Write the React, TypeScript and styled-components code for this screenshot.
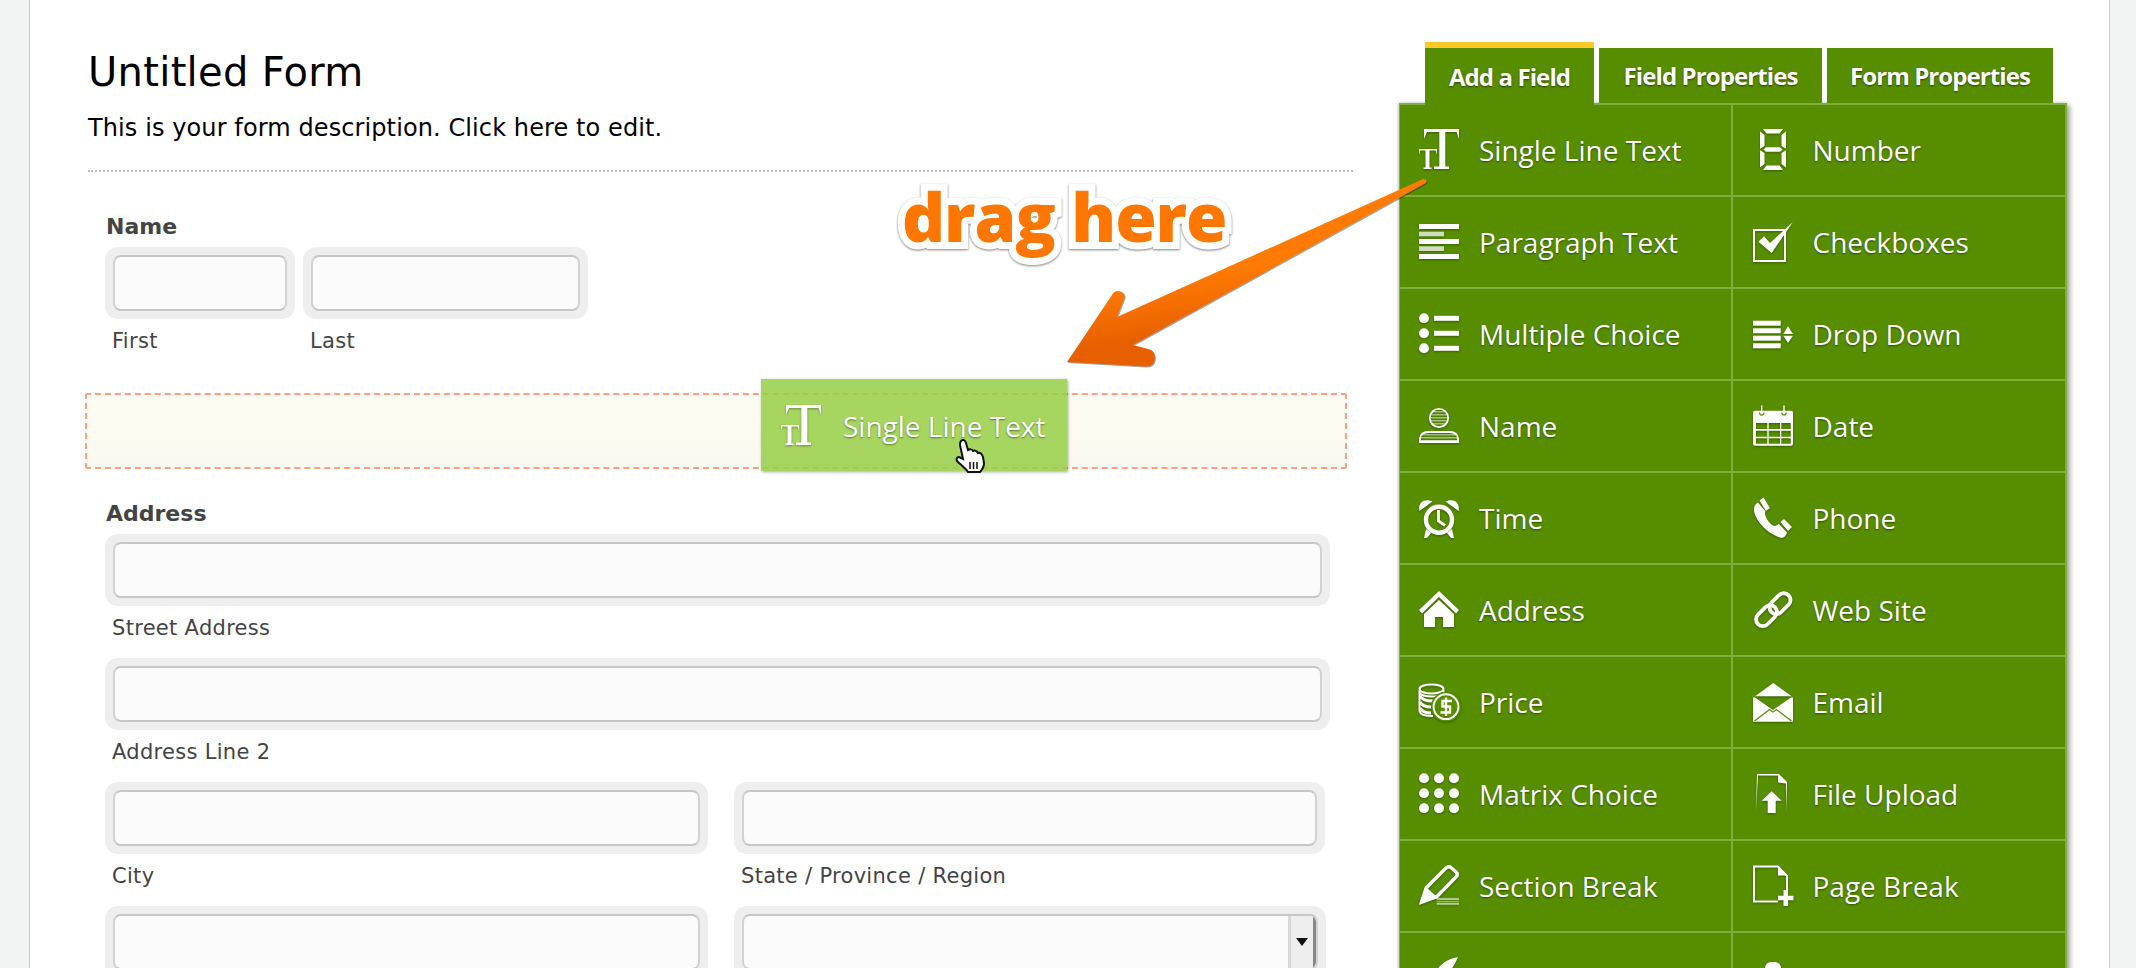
import React from "react";
import styled, { createGlobalStyle } from "styled-components";

const W = "#fff";

const stripes = (y: number, h: number, x: number, w: number) => {
  const out = [];
  for (let i = y; i < y + h; i += 3) {
    out.push(<rect key={i} x={x} y={i} width={w} height={1.5} fill={W} opacity={0.5} />);
  }
  return out;
};

const icons: Record<string, React.ReactNode> = {
  single: (
    <>
      <path d="M5 0H40V10L37.5 3H26.3V37.5H30V40H15V37.5H20.3V3H8L5 10Z" fill={W} />
      <path d="M0 20H18V26L16.8 21.5H10.5V38.5H12.5V40H4.5V38.5H6.5V21.5H1.2L0 26Z" fill={W} />
    </>
  ),
  paragraph: (
    <>
      <rect y="3" width="40" height="5" fill={W} />
      <rect y="10.7" width="25" height="4.6" fill={W} opacity="0.75" />
      <rect y="18" width="40" height="5" fill={W} />
      <rect y="25.3" width="25" height="4.7" fill={W} opacity="0.75" />
      <rect y="33" width="40" height="5" fill={W} />
    </>
  ),
  multiple: (
    <>
      {[5.3, 20.3, 35.3].map((y) => (
        <g key={y}>
          <circle cx="5" cy={y} r="5" fill={W} />
          <rect x="15" y={y - 2.5} width="25" height="5" fill={W} />
        </g>
      ))}
    </>
  ),
  name: (
    <>
      <clipPath id="nameHead">
        <circle cx="20" cy="13" r="9" />
      </clipPath>
      <clipPath id="nameBody">
        <path d="M0 37.5V34C0 28.5 5 26 10 26H30C35 26 40 28.5 40 34V37.5Z" />
      </clipPath>
      <g clipPath="url(#nameHead)">{stripes(3, 20, 10, 20)}</g>
      <g clipPath="url(#nameBody)">{stripes(26, 12, 0, 40)}</g>
      <circle cx="20" cy="13" r="9.2" fill="none" stroke={W} strokeWidth="1.8" />
      <path d="M1 37V34C1 29 5 27 10 27H30C35 27 39 29 39 34V37Z" fill="none" stroke={W} strokeWidth="1.8" />
      <rect y="35.5" width="40" height="2.5" fill={W} />
    </>
  ),
  time: (
    <>
      <path d="M0.5 14C-1.500 6 5 0.500 13.500 4.500Z M39.500 14C41.500 6 35 0.500 26.500 4.500Z" fill={W} />
      <circle cx="20" cy="22.700" r="13" fill="none" stroke={W} strokeWidth="4.400" />
      <path d="M19.500 13V24L26 28.500" fill="none" stroke={W} strokeWidth="2.800" />
      <path d="M7 32L5 41H8L12 36Z M33 32L35 41H32L28 36Z" fill={W} />
    </>
  ),
  address: (
    <>
      <path d="M20 2L40 21L37 24.5L20 8L3 24.5L0 21Z" fill={W} />
      <path d="M20 11L35 25V38H24V28H16V38H5V25Z" fill={W} />
    </>
  ),
  price: (
    <>
      <ellipse cx="12.5" cy="8" rx="12" ry="4.6" fill="none" stroke={W} strokeWidth="2" />
      <path d="M0.5 9V30C1 33 6 35 14 35" fill="none" stroke={W} strokeWidth="2" />
      <path d="M24.5 9V13C22 14.500 17 15.500 12.500 15.500C7 15.500 1 14 0.500 11.500" fill="none" stroke={W} strokeWidth="2" />
      <path d="M1 15C3 19 8 20 14 20M1 21C3 25 7 26 12 26M1 27C3 31 7 32 12 32" fill="none" stroke={W} strokeWidth="3" />
      <circle cx="27" cy="25.7" r="15" fill="#568e00" />
      <circle cx="27" cy="25.7" r="12.4" fill="none" stroke={W} strokeWidth="2" />
      <path d="M33 20H23.500V25.500H31V31.500H21.500M27 16.500V35" fill="none" stroke={W} strokeWidth="2.400" />
    </>
  ),
  matrix: (
    <>
      {[5.3, 20.3, 35.3].map((y) =>
        [5, 20, 35].map((x) => <circle key={`${x}-${y}`} cx={x} cy={y} r="5" fill={W} />)
      )}
    </>
  ),
  section: (
    <>
      <path d="M3 36L8 22L27 3C29 1.500 30.500 1.500 32 2.500L37 7C38.500 8.500 38.500 10.500 37 12L18 31.500Z" fill="none" stroke={W} strokeWidth="3.400" />
      <path d="M0 40L6 21L19 33Z" fill={W} />
      <rect x="17.700" y="33" width="22.300" height="2" fill={W} opacity="0.55" />
      <rect x="17.700" y="35.800" width="22.300" height="1.600" fill={W} opacity="0.4" />
      <rect x="17.700" y="38" width="22.300" height="1.800" fill={W} opacity="0.6" />
    </>
  ),
  signature: <path d="M39 0C28 2 20 8 17 15L6 36L18 24C28 20 35 10 39 0Z" fill={W} />,
  number: (
    <path
      d="M10 0H30L26.500 4.500H13.500Z M7 2.500L11.500 6V17L7 19.800Z M33 2.500L28.500 6V17L33 19.800Z M13 18.300H27L29.500 20.500L27 22.700H13L10.500 20.500Z M7 21.200L11.500 24V35L7 38.500Z M33 21.200L28.500 24V35L33 38.500Z M13.500 36.500H26.500L30 41H10Z"
      fill={W}
    />
  ),
  checkbox: (
    <>
      <rect x="1" y="9" width="31" height="31" fill="none" stroke={W} strokeWidth="2" />
      <path d="M5.300 20.700L11 15.300L17 22L39.700 1.300L18.700 32Z" fill={W} />
    </>
  ),
  dropdown: (
    <>
      {[7.7, 15.3, 22.7, 30.3].map((y) => (
        <rect key={y} y={y} width="27.700" height="5" fill={W} />
      ))}
      <path d="M35 13.300L40 21H30.300Z M30.300 22.700H40L35 30Z" fill={W} />
    </>
  ),
  date: (
    <>
      <path
        fillRule="evenodd"
        d="M2 5.700H38A2 2 0 0 1 40 7.700V38.700A2 2 0 0 1 38 40.700H2A2 2 0 0 1 0 38.700V7.700A2 2 0 0 1 2 5.700Z M3 18V24H14.300V18Z M15.700 18V24H27V18Z M28.300 18V24H37.700V18Z M3 25.700V31.700H14.300V25.700Z M15.700 25.700V31.700H27V25.700Z M28.300 25.700V31.700H37.700V25.700Z M3 33.300V38.700H14.300V33.300Z M15.700 33.300V38.700H27V33.300Z M28.300 33.300V38.700H37.700V33.300Z"
        fill={W}
      />
      <path d="M8.700 0.500V9M31 0.500V9" stroke={W} strokeWidth="1.500" />
      <path d="M6.500 7.500A2.200 2.500 0 0 0 11 7.500M28.800 7.500A2.200 2.500 0 0 0 33.200 7.500" fill="none" stroke="#568e00" strokeWidth="1.200" />
    </>
  ),
  phone: (
    <>
      <path d="M6.500 3.500L10.500 0.500L17 11L13 14Z" fill={W} />
      <path d="M27.500 25L31 22L39 30L35 34Z" fill={W} />
      <path d="M5 5.500C0 8 0 14 3 20C8 30 18 38 28.500 41C31 41 33 38.500 34 35.500L26 27C24 28.500 21.500 30 19 28C15 25 12 19.500 12 16C12 15 12.500 14.500 12.500 14.500Z" fill={W} />
    </>
  ),
  site: (
    <>
      <rect x="15" y="8" width="24" height="13.500" rx="6.700" transform="rotate(-45 27 14.700)" fill="none" stroke={W} strokeWidth="3.800" />
      <rect x="1.500" y="20" width="24" height="13.500" rx="6.700" transform="rotate(-45 13.500 26.700)" fill="none" stroke={W} strokeWidth="3.800" />
    </>
  ),
  email: (
    <>
      <path d="M20.300 2L38.700 15.300H2Z" fill={W} />
      <path d="M0 16.500H2L20 29L38 16.500H40V40.700H0Z" fill={W} />
      <path d="M1.500 40L16.500 28.500L20 31L23.500 28.500L38.500 40" fill="none" stroke="#568e00" strokeWidth="1.300" />
    </>
  ),
  upload: (
    <>
      <path d="M3 39L4 1H26L34 9V39L33 10.500L25 9.500V2.500H5Z" fill={W} />
      <path d="M18.700 18.300L28.700 27.700H22.700V40H14.700V27.700H8.700Z" fill={W} />
    </>
  ),
  page: (
    <>
      <path d="M25 36.500H1V1.500H25L34 11V26" fill="none" stroke={W} strokeWidth="2" />
      <path d="M25 1.500V10.500H34Z" fill={W} />
      <path d="M30.500 25H35V30.700H40.500V35.300H35V41H30.500V35.300H25V30.700H30.500Z" fill={W} />
    </>
  ),
  media: <rect x="12" y="5" width="16" height="34" rx="6" fill={W} />,
};

const fields = [
  ["single", "Single Line Text"],
  ["number", "Number"],
  ["paragraph", "Paragraph Text"],
  ["checkbox", "Checkboxes"],
  ["multiple", "Multiple Choice"],
  ["dropdown", "Drop Down"],
  ["name", "Name"],
  ["date", "Date"],
  ["time", "Time"],
  ["phone", "Phone"],
  ["address", "Address"],
  ["site", "Web Site"],
  ["price", "Price"],
  ["email", "Email"],
  ["matrix", "Matrix Choice"],
  ["upload", "File Upload"],
  ["section", "Section Break"],
  ["page", "Page Break"],
  ["signature", "Signature"],
  ["media", "Media"],
];

function FieldIcon({ name }: { name: string }) {
  return (
    <IconSvg viewBox="0 0 40 41" width="40" height="41">
      {icons[name]}
    </IconSvg>
  );
}

function Box({ width, children }: { width: number; children?: React.ReactNode }) {
  return (
    <InputWrap $width={width}>
      <InputField>{children}</InputField>
    </InputWrap>
  );
}

function App() {
  return (
    <>
      <GlobalStyle />
      <Page>
        <FormColumn>
          <FormTitle>Untitled Form</FormTitle>
          <FormDesc>This is your form description. Click here to edit.</FormDesc>
          <Rule />
          <FieldBlock>
            <FieldLabel>Name</FieldLabel>
            <FieldRow $gap={8}>
              <div>
                <Box width={190} />
                <SubLabel>First</SubLabel>
              </div>
              <div>
                <Box width={285} />
                <SubLabel>Last</SubLabel>
              </div>
            </FieldRow>
          </FieldBlock>
          <DropZone />
          <FieldBlock>
            <FieldLabel>Address</FieldLabel>
            <Box width={1225} />
            <SubLabel>Street Address</SubLabel>
            <Box width={1225} />
            <SubLabel>Address Line 2</SubLabel>
            <FieldRow $gap={26}>
              <div>
                <Box width={603} />
                <SubLabel>City</SubLabel>
                <Box width={603} />
              </div>
              <div>
                <Box width={591} />
                <SubLabel>State / Province / Region</SubLabel>
                <Box width={592}>
                  <SelectButton>
                    <SelectArrow />
                  </SelectButton>
                </Box>
              </div>
            </FieldRow>
          </FieldBlock>
        </FormColumn>

        <Sidebar>
          <TabRow>
            <Tab $active>Add a Field</Tab>
            <Tab $width={223}>Field Properties</Tab>
            <Tab $width={226}>Form Properties</Tab>
          </TabRow>
          <Panel>
            {fields.map(([icon, text]) => (
              <FieldCell key={text}>
                <FieldIcon name={icon} />
                <CellText>{text}</CellText>
              </FieldCell>
            ))}
          </Panel>
        </Sidebar>

        <DragHint>drag here</DragHint>

        <ArrowSvg viewBox="1060 175 372 197" width="372" height="197">
          <defs>
            <linearGradient id="arrowFill" x1="0.42" y1="0.5" x2="0.5" y2="0.78">
              <stop offset="0" stopColor="#ff7a00" />
              <stop offset="1" stopColor="#e65f00" />
            </linearGradient>
          </defs>
          <path
            d="M1422 179.500C1425 178 1428 181 1426 183L1133 345L1148 349C1155 350 1156 358 1154 362C1152 366 1149 367 1145 366.500L1067 362L1112 295C1114 290 1120 290 1123 293C1125 295 1125 297 1124 299L1117 317Z"
            fill="url(#arrowFill)"
          />
        </ArrowSvg>

        <DragChip>
          <FieldIcon name="single" />
          <CellText>Single Line Text</CellText>
        </DragChip>

        <HandCursor viewBox="0 0 30 34" width="30" height="34">
          <path
            d="M6 2C8 0 10 1 11 4L13 11C15 10 17 10 18 12C20 11 22 12 23 14C25 13 27 15 28 18L29 24C29 28 27 31 25 33H13C10 29 6 26 2 22C1 20 2 18 4 18L8 20L5 6C5 4 5 3 6 2Z"
            fill={W}
            stroke="#111"
            strokeWidth="2"
          />
          <path d="M15 23V30M18.500 23V30M22 23V30" stroke="#111" strokeWidth="1.500" />
        </HandCursor>
      </Page>
    </>
  );
}

export default App;

const GlobalStyle = createGlobalStyle`
  html, body {
    margin: 0;
    padding: 0;
    height: 968px;
    overflow: hidden;
    background: #f1f4f3;
  }
`;

const Page = styled.div`
  position: relative;
  display: flex;
  box-sizing: border-box;
  width: 2081px;
  height: 968px;
  margin-left: 29px;
  background: #fff;
  border-left: 1px solid #c8c8c8;
  border-right: 1px solid #c8c8c8;
  overflow: hidden;
`;

const FormColumn = styled.div`
  box-sizing: border-box;
  width: 1369px;
  flex: none;
  padding: 49px 0 0 58px;
  font-family: "DejaVu Sans", sans-serif;
`;

const FormTitle = styled.div`
  font-size: 40px;
  line-height: 46px;
  letter-spacing: 0.3px;
  color: #000;
`;

const FormDesc = styled.div`
  margin-top: 19px;
  font-size: 24px;
  line-height: 28px;
  letter-spacing: 0.1px;
  color: #000;
`;

const Rule = styled.div`
  width: 1265px;
  margin: 28px 0 42px;
  border-top: 2px dotted #bbb;
`;

const FieldBlock = styled.div`
  margin-left: 17px;
`;

const FieldLabel = styled.div`
  margin: 0 0 7px 1px;
  font-size: 22px;
  font-weight: bold;
  line-height: 26px;
  color: #444;
`;

const FieldRow = styled.div<{ $gap: number }>`
  display: flex;
  gap: ${(p) => p.$gap}px;
`;

const InputWrap = styled.div<{ $width: number }>`
  box-sizing: border-box;
  width: ${(p) => p.$width}px;
  height: 72px;
  padding: 8px;
  background: #eee;
  border-radius: 13px;
`;

const InputField = styled.div`
  display: flex;
  justify-content: flex-end;
  box-sizing: border-box;
  height: 56px;
  background: #fbfbfb;
  border: 2px solid #c6c6c6;
  border-left-color: #d2d2d2;
  border-right-color: #d2d2d2;
  border-radius: 8px;
  overflow: hidden;
`;

const SubLabel = styled.div`
  margin: 9px 0 17px 7px;
  font-size: 21px;
  line-height: 26px;
  letter-spacing: 0.3px;
  color: #444;
`;

const DropZone = styled.div`
  box-sizing: border-box;
  width: 1262px;
  height: 76px;
  margin: 22px 0 32px -3px;
  border: 2px dashed #ff9f80;
  border-radius: 2px;
  background: linear-gradient(#fdfcf2, #f9f9f1);
`;

const SelectButton = styled.div`
  display: flex;
  align-items: center;
  justify-content: center;
  box-sizing: border-box;
  width: 28px;
  background: #eee;
  border-left: 3px solid #d8d8d8;
  border-right: 3px solid #888;
`;

const SelectArrow = styled.div`
  width: 0;
  height: 0;
  border-left: 6px solid transparent;
  border-right: 6px solid transparent;
  border-top: 8px solid #111;
`;

const Sidebar = styled.div`
  width: 668px;
  flex: none;
  padding-top: 42px;
`;

const TabRow = styled.div`
  display: flex;
  align-items: flex-end;
  gap: 5px;
  margin-left: 26px;
`;

const Tab = styled.div<{ $active?: boolean; $width?: number }>`
  position: relative;
  z-index: 1;
  display: flex;
  align-items: center;
  justify-content: center;
  box-sizing: border-box;
  width: ${(p) => (p.$active ? 169 : p.$width)}px;
  height: ${(p) => (p.$active ? 63 : 55)}px;
  margin-bottom: ${(p) => (p.$active ? -2 : 0)}px;
  background: #568e00;
  border-top: ${(p) => (p.$active ? "6px solid #ffc926" : "none")};
  font-family: "Open Sans", sans-serif;
  font-size: 24px;
  font-weight: bold;
  letter-spacing: -0.9px;
  color: #fff;
  text-shadow: 0 1px 2px rgba(0, 0, 0, 0.55);
`;

const Panel = styled.div`
  display: grid;
  grid-template-columns: 332.5px 334.5px;
  grid-auto-rows: 92px;
  box-sizing: border-box;
  width: 668px;
  background: #568e00;
  border-top: 2px solid #80ae3e;
  border-left: 1px solid #80ae3e;
  box-shadow: 3px 2px 5px rgba(0, 0, 0, 0.35), -1px 0 3px rgba(0, 0, 0, 0.2);
`;

const FieldCell = styled.div`
  display: flex;
  align-items: center;
  gap: 20px;
  box-sizing: border-box;
  padding: 0 0 2px 19px;
  border-right: 2px solid #80ae3e;
  border-bottom: 2px solid #80ae3e;

  &:nth-child(even) {
    padding-left: 20px;
  }
`;

const IconSvg = styled.svg`
  flex: none;
  overflow: visible;
  filter: drop-shadow(0 1px 1px rgba(0, 0, 0, 0.35));
`;

const CellText = styled.span`
  margin-top: 1px;
  font-family: "Open Sans", sans-serif;
  font-size: 28px;
  color: #fff;
  text-shadow: 0 1px 2px rgba(0, 0, 0, 0.45);
  white-space: nowrap;
`;

const DragHint = styled.div`
  position: absolute;
  left: 872px;
  top: 173px;
  z-index: 2;
  font-family: "Open Sans", sans-serif;
  font-size: 67px;
  font-weight: 800;
  line-height: 86px;
  letter-spacing: -1px;
  color: #ff7700;
  -webkit-text-stroke: 14px #fff;
  paint-order: stroke fill;
  filter: drop-shadow(0 1px 1px rgba(0, 0, 0, 0.5));
`;

const ArrowSvg = styled.svg`
  position: absolute;
  left: 1030px;
  top: 175px;
  z-index: 3;
  filter: drop-shadow(1px 1px 0 rgba(0, 0, 0, 0.35));
`;

const DragChip = styled.div`
  position: absolute;
  left: 731px;
  top: 379px;
  z-index: 4;
  display: flex;
  align-items: center;
  gap: 22px;
  box-sizing: border-box;
  width: 306px;
  height: 92px;
  padding-left: 20px;
  background: rgba(150, 207, 70, 0.85);
  box-shadow: 1px 1px 3px rgba(0, 0, 0, 0.35);
`;

const HandCursor = styled.svg`
  position: absolute;
  left: 925px;
  top: 439px;
  z-index: 5;
`;
